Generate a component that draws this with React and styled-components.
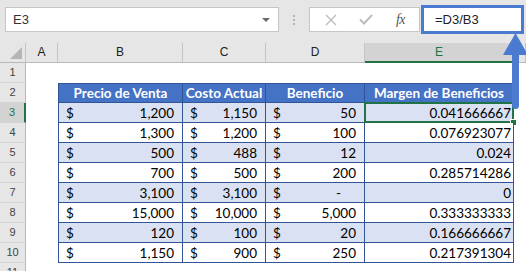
import React from 'react';
import styled, { createGlobalStyle, css } from 'styled-components';

const GlobalStyle = createGlobalStyle`
  html, body {
    margin: 0;
    padding: 0;
    background: #fff;
  }
  body {
    font-family: Lato, "Liberation Sans", sans-serif;
  }
`;

const GREEN = '#217346';
const LINE = '#2f5597';

const Window = styled.div`
  position: relative;
  width: 526px;
  height: 271px;
  overflow: hidden;
  background: #fff;
`;

/* formula bar */

const FormulaBar = styled.div`
  display: flex;
  align-items: flex-start;
  height: 43px;
  padding: 7px 0 0 5px;
  box-sizing: border-box;
  background: #e6e6e6;
`;

const NameBox = styled.div`
  display: flex;
  align-items: center;
  justify-content: space-between;
  width: 274px;
  height: 25px;
  box-sizing: border-box;
  padding: 0 8px 0 7px;
  background: #fff;
  border: 1px solid #c6c6c6;
  font: 13px "Liberation Sans", sans-serif;
  color: #333;
`;

const DropCaret = styled.span`
  width: 0;
  height: 0;
  border-left: 4px solid transparent;
  border-right: 4px solid transparent;
  border-top: 4px solid #6a6a6a;
`;

const Grip = styled.div`
  display: flex;
  flex-direction: column;
  align-items: center;
  gap: 2px;
  width: 30px;
  padding-top: 8px;

  span {
    width: 2px;
    height: 2px;
    background: #b3b3b3;
  }
`;

const FxBox = styled.div`
  display: grid;
  grid-template-columns: repeat(3, 35px);
  align-items: center;
  justify-items: center;
  width: 111px;
  height: 25px;
  box-sizing: border-box;
  padding-left: 3px;
  background: #fff;
  border: 1px solid #c6c6c6;
`;

const FxLabel = styled.span`
  font: italic 14px "Liberation Serif", serif;
  color: #555;
  letter-spacing: -0.5px;
`;

const FormulaInput = styled.div`
  display: flex;
  align-items: center;
  width: 103px;
  height: 29px;
  margin: -2px 0 0 1px;
  box-sizing: border-box;
  padding-left: 11px;
  background: #fff;
  border: 3px solid #4a7bd0;
  font: 13px "Liberation Sans", sans-serif;
  color: #222;
`;

/* sheet */

const SheetRow = styled.div`
  display: grid;
  grid-template-columns: 26px 32px 125px 83px 99px 149px 1fr;
  height: 20px;
`;

const Corner = styled.div`
  position: relative;
  background: #e6e6e6;
  border-right: 1px solid #c4c4c4;
  border-bottom: 1px solid #b9b9b9;

  &::after {
    content: '';
    position: absolute;
    right: 3px;
    bottom: 3px;
    border-left: 12px solid transparent;
    border-bottom: 12px solid #b5b5b5;
  }
`;

const ColHead = styled.div`
  box-sizing: border-box;
  height: 20px;
  background: #e6e6e6;
  border-right: 1px solid #c4c4c4;
  border-bottom: 1px solid #b9b9b9;
  font: 12px "Liberation Sans", sans-serif;
  line-height: 19px;
  text-align: center;
  color: #222;

  ${p => p.$active && css`
    background: #d3d3d3;
    color: ${GREEN};
    border-bottom: 2px solid ${GREEN};
    line-height: 18px;
  `}
`;

const RowHead = styled.div`
  box-sizing: border-box;
  height: 20px;
  background: #e6e6e6;
  border-right: 1px solid #b9b9b9;
  border-bottom: 1px solid #d4d4d4;
  font: 11px "Liberation Sans", sans-serif;
  line-height: 19px;
  text-align: center;
  color: #444;

  ${p => p.$active && css`
    background: #d3d3d3;
    color: ${GREEN};
    border-right: 2px solid ${GREEN};
  `}
`;

const Blank = styled.div`
  background: #fff;
`;

const Cell = styled.div`
  position: relative;
  display: flex;
  align-items: center;
  justify-content: ${p => (p.$money ? 'space-between' : 'flex-end')};
  box-sizing: border-box;
  height: 20px;
  padding: 0 ${p => p.$padRight ?? 8}px 0 7px;
  background: ${p => (p.$band ? '#d9e1f2' : '#fff')};
  border-right: 1px solid ${LINE};
  border-bottom: 1px solid ${LINE};
  border-left: ${p => (p.$first ? `1px solid ${LINE}` : 'none')};
  font-size: 13.5px;
  color: #000;
  white-space: nowrap;
`;

const HeadCell = styled(Cell)`
  justify-content: center;
  padding: 0;
  background: #4472c4;
  border-top: 1px solid ${LINE};
  font-size: 13.5px;
  font-weight: 700;
  color: #fff;
`;

// active cell outline with the fill handle in its corner
const Selection = styled.div`
  position: absolute;
  inset: -1px;
  border: 2px solid ${GREEN};
  pointer-events: none;

  &::after {
    content: '';
    position: absolute;
    right: -5px;
    bottom: -5px;
    width: 5px;
    height: 5px;
    background: ${GREEN};
    border: 1px solid #fff;
  }
`;

const Arrow = styled.svg`
  position: absolute;
  left: 500px;
  top: 30px;
`;

const headers = ['Precio de Venta', 'Costo Actual', 'Beneficio', 'Margen de Beneficios'];

const rows = [
  ['1,200', '1,150', '50', '0.041666667'],
  ['1,300', '1,200', '100', '0.076923077'],
  ['500', '488', '12', '0.024'],
  ['700', '500', '200', '0.285714286'],
  ['3,100', '3,100', '-', '0'],
  ['15,000', '10,000', '5,000', '0.333333333'],
  ['120', '100', '20', '0.166666667'],
  ['1,150', '900', '250', '0.217391304'],
];

const Cross = () => (
  <svg width="12" height="12" viewBox="0 0 12 12">
    <path d="M1 1 L11 11 M11 1 L1 11" stroke="#bdbdbd" strokeWidth="1.4" fill="none" />
  </svg>
);

const Check = () => (
  <svg width="14" height="11" viewBox="0 0 14 11">
    <path d="M1 5.5 L5 9.5 L13 1" stroke="#bdbdbd" strokeWidth="2" fill="none" />
  </svg>
);

const App = () => (
  <Window>
    <GlobalStyle />
    <FormulaBar>
      <NameBox>
        E3
        <DropCaret />
      </NameBox>
      <Grip>
        <span />
        <span />
        <span />
      </Grip>
      <FxBox>
        <Cross />
        <Check />
        <FxLabel>fx</FxLabel>
      </FxBox>
      <FormulaInput>=D3/B3</FormulaInput>
    </FormulaBar>

    <SheetRow>
      <Corner />
      {['A', 'B', 'C', 'D', 'E', 'F'].map(l => (
        <ColHead key={l} $active={l === 'E'}>{l === 'F' ? '' : l}</ColHead>
      ))}
    </SheetRow>

    <SheetRow>
      <RowHead>1</RowHead>
    </SheetRow>

    <SheetRow>
      <RowHead>2</RowHead>
      <Blank />
      {headers.map((h, i) => (
        <HeadCell key={h} $first={i === 0}>{h}</HeadCell>
      ))}
    </SheetRow>

    {rows.map((r, idx) => {
      const n = idx + 3;
      const band = idx % 2 === 0;
      return (
        <SheetRow key={n}>
          <RowHead $active={n === 3}>{n}</RowHead>
          <Blank />
          {r.slice(0, 3).map((val, i) => (
            <Cell key={i} $money $band={band} $first={i === 0} $padRight={val === '-' ? 23 : 8}>
              <span>$</span>
              <span>{val}</span>
            </Cell>
          ))}
          <Cell $band={band} $padRight={2}>
            {r[3]}
            {n === 3 && <Selection />}
          </Cell>
        </SheetRow>
      );
    })}

    <SheetRow>
      <RowHead>11</RowHead>
    </SheetRow>

    <Arrow width="26" height="82" viewBox="0 0 26 82">
      <rect x="12" y="18" width="7" height="61" rx="3.5" fill="#4a7bd0" />
      <polygon points="15.5,3 3,25 28,25" fill="#4a7bd0" />
    </Arrow>
  </Window>
);

export default App;
